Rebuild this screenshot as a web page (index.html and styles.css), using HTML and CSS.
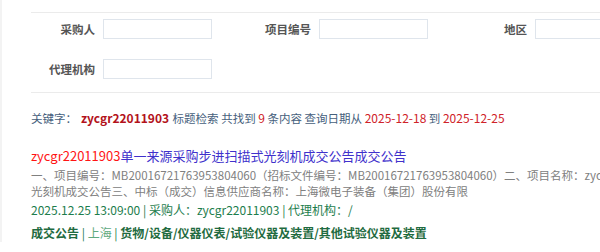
FILE: index.html
```html
<!DOCTYPE html>
<html lang="zh-CN">
<head>
  <meta charset="UTF-8" />
  <title>搜索结果</title>
  <link rel="stylesheet" href="styles.css">
</head>
<body>
  <div class="page">

    <div class="search-form">
      <div class="form-row">
        <div class="field">
          <label>采购人</label>
          <input type="text" />
        </div>
        <div class="field">
          <label>项目编号</label>
          <input type="text" />
        </div>
        <div class="field">
          <label>地区</label>
          <input type="text" />
        </div>
      </div>
      <div class="form-row">
        <div class="field">
          <label>代理机构</label>
          <input type="text" />
        </div>
      </div>
    </div>

    <p class="summary">
      关键字：<b class="kw">zycgr22011903</b> 标题检索 共找到 <span class="num">9</span> 条内容 查询日期从 <span class="num">2025-12-18</span> 到 <span class="num">2025-12-25</span>
    </p>

    <div class="result">
      <a class="title" href="#"><span class="hit">zycgr22011903</span>单一来源采购步进扫描式光刻机成交公告成交公告</a>
      <p class="desc">一、项目编号：MB20016721763953804060（招标文件编号：MB20016721763953804060）二、项目名称：zycgr22011903单一来源采购步进扫描式光刻机成交公告三、中标（成交）信息供应商名称：上海微电子装备（集团）股份有限</p>
      <p class="meta">2025.12.25 13:09:00 | 采购人：zycgr22011903 | 代理机构：/</p>
      <p class="tags"><b>成交公告</b> | <span class="area">上海</span> | <b>货物/设备/仪器仪表/试验仪器及装置/其他试验仪器及装置</b></p>
    </div>

  </div>
</body>
</html>
```

FILE: styles.css
```css
html, body {
  margin: 0;
  padding: 0;
  background: #fff;
  overflow: hidden;
}

body {
  font-family: "Noto Sans CJK SC", "Noto Sans", sans-serif;
  border-left: 2px solid #f3f3f3;
}

.page {
  width: 760px;
  margin-left: 29px;
  padding-top: 12px;
}

.search-form {
  border-top: 1px solid #ebebeb;
  border-bottom: 1px solid #ebebeb;
  padding: 6px 0 13px;
}

.form-row {
  display: flex;
  height: 20px;
  margin-bottom: 20px;
}

.form-row:last-child {
  margin-bottom: 0;
}

.field {
  display: flex;
  align-items: center;
  width: 216px;
}

.field label {
  width: 64px;
  margin-right: 8px;
  text-align: right;
  font-size: 11.5px;
  font-weight: bold;
  color: #555;
}

.field input {
  width: 109px;
  height: 20px;
  box-sizing: border-box;
  border: 1px solid #dfe5ec;
  margin: 0;
  padding: 0 4px;
}

.summary {
  margin: 16px 0 0;
  font-size: 11.5px;
  line-height: 18px;
  color: #46607c;
}

.summary .kw {
  color: #b3121b;
  font-size: 12px;
  margin: 0 1px 0 4px;
}

.summary .num {
  color: #cf2229;
  font-size: 12px;
}

.result {
  margin-top: 20px;
}

.title {
  display: block;
  font-size: 13px;
  line-height: 18px;
  color: #4031cc;
  text-decoration: none;
}

.title .hit {
  color: #ff1414;
}

.desc {
  margin: 2px 0 0;
  font-size: 11.5px;
  line-height: 16px;
  color: #808080;
}

.meta {
  margin: 2px 0 0;
  font-size: 12px;
  line-height: 18px;
  color: #1d7d4d;
}

.tags {
  margin: 5px 0 0;
  font-size: 12px;
  line-height: 18px;
  color: #1d7d4d;
}

.tags b {
  color: #1f6b40;
}

.tags .area {
  color: #5ea97e;
}
```
